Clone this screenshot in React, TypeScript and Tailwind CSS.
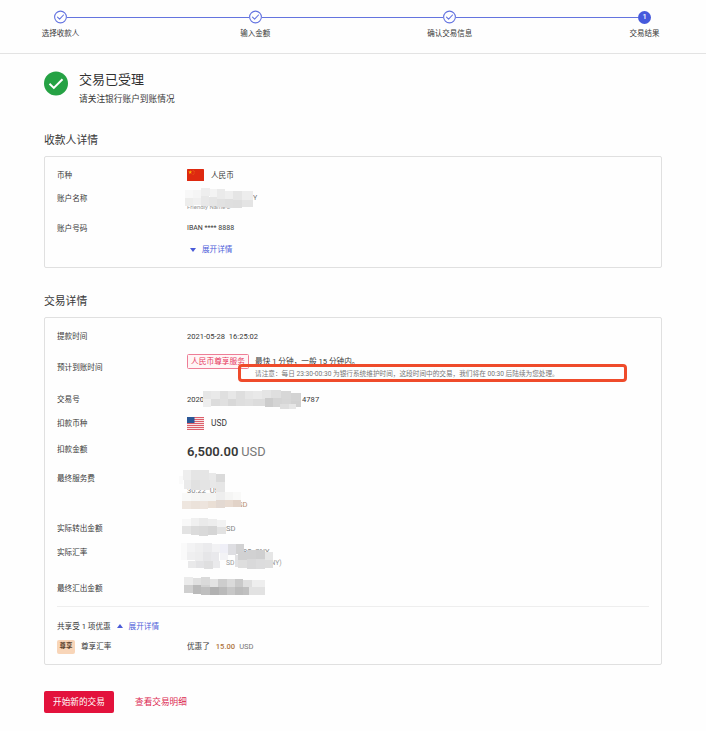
import React from 'react';
import clsx from 'clsx';

type Cell = [x: number, y: number, w: number, h: number, fill: string];

interface MosaicProps {
  cells: Cell[];
  className: string;
}

// Pixelated block covering private values
const Mosaic: React.FC<MosaicProps> = ({ cells, className }) => (
  <svg className={clsx('absolute', className)} width="130" height="50" viewBox="0 0 130 50" aria-hidden="true">
    {cells.map(([x, y, w, h, fill], i) => (
      <rect key={i} x={x} y={y} width={w} height={h} fill={fill} />
    ))}
  </svg>
);

const nameCells: Cell[] = [
  [0, 3, 8, 8, '#f8f8f8'], [8, 3, 8, 8, '#f5f5f5'], [0, 11, 8, 8, '#ededec'], [8, 11, 8, 7, '#f0f0f0'],
  [16, 1, 9, 8, '#eeeeee'], [25, 2, 7, 8, '#f3f3f3'], [16, 9, 8, 10, '#e8e8e8'], [24, 10, 8, 9, '#e5e5e5'],
  [32, 2, 8, 10, '#eaeaea'], [40, 4, 8, 8, '#eeeeee'], [32, 12, 8, 8, '#e1e1e1'], [40, 12, 8, 9, '#dfdfdf'],
  [48, 4, 9, 9, '#e5e5e5'], [57, 4, 11, 9, '#ededed'], [48, 13, 9, 8, '#dedede'], [57, 13, 11, 7, '#e4e4e4'],
];

const orderCells: Cell[] = [
  [0, 2, 8, 8, '#e6e6e6'], [8, 2, 9, 8, '#e9e9e9'], [17, 2, 8, 8, '#dfdfdf'], [25, 2, 8, 8, '#e7e7e7'],
  [33, 2, 9, 8, '#dedede'], [42, 2, 8, 8, '#e6e6e6'], [50, 2, 9, 8, '#e9e9e9'],
  [0, 10, 8, 8, '#eeeeee'], [8, 10, 9, 7, '#dcdcdc'], [17, 10, 8, 7, '#e0e0e0'], [25, 10, 8, 7, '#d8d8d8'],
  [33, 10, 9, 7, '#dedede'], [42, 10, 8, 7, '#e0e0e0'], [50, 10, 12, 7, '#dcdcdc'],
  [59, 1, 9, 9, '#e5e5e5'], [68, 1, 10, 8, '#dfdfdf'], [78, 2, 10, 8, '#d7d7d7'], [88, 4, 10, 8, '#d3d3d3'],
  [62, 9, 8, 9, '#cccccc'], [70, 9, 9, 9, '#d4d4d4'], [79, 10, 9, 9, '#d6d6d6'], [88, 12, 10, 6, '#d1d1d1'],
  [77, 15, 9, 5, '#dedede'], [86, 15, 7, 5, '#e6e6e6'],
];

const feeCells: Cell[] = [
  [0, 7, 4, 8, '#fafafa'], [4, 1, 8, 10, '#eeeeee'], [12, 1, 9, 10, '#e5e5e5'], [21, 1, 9, 10, '#e5e5e5'],
  [30, 4, 7, 8, '#e9e9e9'], [5, 11, 7, 9, '#eaeaea'], [12, 11, 9, 10, '#e1e1e1'], [21, 11, 10, 10, '#e4e4e4'],
  [31, 11, 7, 8, '#e8e8e8'], [37, 5, 9, 8, '#dadada'], [37, 13, 9, 10, '#e6e6e6'],
  [3, 24, 9, 8, '#f9f9f8'], [12, 24, 9, 8, '#f6f6f5'], [21, 24, 16, 8, '#f4f4f3'], [37, 23, 9, 9, '#eeeeee'],
  [46, 23, 8, 8, '#f5f5f4'], [54, 23, 8, 8, '#f9f9f8'],
  [3, 32, 9, 8, '#eee6df'], [12, 32, 9, 8, '#ebe2da'], [21, 32, 8, 8, '#ede4dd'], [29, 32, 8, 7, '#eadfd5'],
  [37, 31, 9, 8, '#e3d9d2'], [46, 31, 8, 7, '#e8dbd1'], [54, 31, 8, 7, '#e2d3c8'],
];

const outCells: Cell[] = [
  [0, 2, 9, 8, '#f8f8f8'], [9, 1, 8, 8, '#f0f0f0'], [17, 1, 9, 8, '#eaeaea'], [26, 2, 9, 8, '#ededed'],
  [35, 3, 9, 7, '#f2f2f2'], [0, 9, 9, 8, '#e3e3e3'], [9, 9, 8, 9, '#dbdbdb'], [17, 9, 9, 10, '#d9d9d9'],
  [26, 9, 9, 9, '#d5d5d5'], [35, 10, 9, 7, '#e2e2e2'],
];

const rateCells: Cell[] = [
  [0, 0, 6, 9, '#fafafa'], [6, 0, 8, 9, '#f3f3f4'], [14, 0, 8, 9, '#efeff0'], [22, 0, 9, 9, '#ebebed'],
  [31, 1, 8, 9, '#f2f2f4'], [39, 1, 8, 9, '#efeff7'], [47, 1, 8, 11, '#dedee2'], [55, 1, 8, 10, '#d2d2d3'],
  [0, 9, 6, 8, '#fafafa'], [6, 9, 8, 8, '#efeff0'], [14, 9, 8, 9, '#ededee'], [22, 9, 8, 9, '#e6e6e8'],
  [30, 9, 8, 9, '#e9e9ec'], [39, 10, 8, 7, '#f3f3f6'], [54, 12, 3, 12, '#e2e2e4'],
  [7, 18, 8, 7, '#e9e9ea'], [15, 18, 8, 7, '#e3e3e5'], [23, 18, 9, 8, '#dfdfe0'], [32, 18, 7, 7, '#eaeaec'],
  [57, 9, 9, 9, '#d1d1d2'], [66, 7, 9, 9, '#d1d1d2'], [75, 7, 9, 9, '#cfcfd0'], [84, 9, 8, 8, '#e6e6e6'],
  [57, 17, 9, 8, '#dedede'], [66, 16, 9, 10, '#d9d9da'], [75, 16, 9, 10, '#dcdcdd'], [84, 17, 8, 8, '#dddddd'],
];

const totalCells: Cell[] = [
  [0, 1, 9, 9, '#ebebeb'], [9, 2, 8, 7, '#e0e0e0'], [17, 1, 9, 8, '#dadada'], [26, 3, 8, 8, '#e3e3e3'],
  [34, 3, 9, 8, '#cdcdcd'], [43, 3, 8, 8, '#dadada'], [51, 3, 8, 8, '#c9c9c9'], [59, 4, 9, 8, '#dfdfdf'],
  [68, 4, 13, 8, '#eeeeee'], [0, 9, 9, 8, '#cfcfcf'], [9, 9, 8, 9, '#bababa'], [17, 9, 9, 9, '#d2d2d2'],
  [17, 11, 9, 8, '#bfbfbf'], [26, 11, 9, 8, '#b1b1b1'], [35, 11, 8, 8, '#bababa'], [43, 11, 8, 8, '#c7c7c7'],
  [51, 11, 8, 8, '#bcbcbc'], [59, 11, 6, 8, '#c0c0c0'], [65, 11, 16, 8, '#e2e2e2'],
];

const ChinaFlag: React.FC = () => (
  <svg width="17" height="12" viewBox="0 0 17 12">
    <rect width="17" height="12" rx="0.6" fill="#de2910" />
    <path d="M3.2 1.2l.5 1.3 1.4.1-1.1.9.4 1.4-1.2-.8-1.2.8.4-1.4-1.1-.9 1.4-.1z" fill="#ffb400" />
    <g fill="#f0831a">
      <circle cx="6.1" cy="1.3" r=".45" />
      <circle cx="7.1" cy="2.5" r=".45" />
      <circle cx="7.1" cy="4" r=".45" />
      <circle cx="6.1" cy="5.2" r=".45" />
    </g>
  </svg>
);

const UsFlag: React.FC = () => (
  <svg width="17" height="13" viewBox="0 0 17 13">
    <rect width="17" height="13" rx="0.6" fill="#f6e4e5" />
    {[0, 2, 4, 6, 8, 10, 12].map((y) => (
      <rect key={y} y={y} width="17" height="1" fill="#dd5f6b" />
    ))}
    <rect width="7.5" height="6" fill="#2a5796" />
  </svg>
);

const steps = ['选择收款人', '输入金额', '确认交易信息', '交易结果'];

const Steps: React.FC = () => (
  <div className="h-[54px] border-b border-[#e3e3e3] pl-[54px] pr-[55px] pt-[10px]">
    <div className="flex items-start">
      {steps.map((label, i) => (
        <React.Fragment key={label}>
          {i > 0 && <div className="mt-[6.5px] h-px flex-1 bg-[#6474df]" />}
          <div className="flex w-[13px] shrink-0 flex-col items-center">
            {i < steps.length - 1 ? (
              <svg width="13" height="14" viewBox="0 0 13 14" fill="none" stroke="#6272e0" strokeLinecap="round" strokeLinejoin="round">
                <circle cx="6.5" cy="7" r="5.9" strokeWidth="1.1" />
                <path d="M3.5 7.2l2.1 2L9.5 5" strokeWidth="1.1" />
              </svg>
            ) : (
              <div className="my-[0.5px] flex size-[13px] items-center justify-center rounded-full bg-[#4559dc] text-[7.5px] font-medium leading-none text-white">1</div>
            )}
            <span className="mt-[4px] whitespace-nowrap text-[7.5px] leading-[11px]">{label}</span>
          </div>
        </React.Fragment>
      ))}
    </div>
  </div>
);

interface RowProps {
  label?: string;
  className?: string;
  children: React.ReactNode;
}

const Row: React.FC<RowProps> = ({ label, className, children }) => (
  <div className={clsx('flex items-center', className)}>
    <span className="w-[130px] shrink-0 whitespace-nowrap">{label}</span>
    <div className="relative flex h-full min-w-0 flex-1 items-center whitespace-nowrap">{children}</div>
  </div>
);

export default function App() {
  return (
    <div className="h-[731px] w-[706px] overflow-hidden bg-[#fefefe] font-[Roboto,'Noto_Sans_CJK_SC',sans-serif] text-[7.6px] leading-[11px] text-[#383838]">
      <Steps />

      <main className="ml-[44px] w-[618px]">
        {/* Result */}
        <div className="flex pt-[17px]">
          <svg className="shrink-0" width="24" height="25" viewBox="0 0 24 25">
            <circle cx="12" cy="12.4" r="12" fill="#25a244" />
            <path d="M5.5 12.8l4.3 4.1 8.7-8.7" fill="none" stroke="#fff" strokeWidth="2" />
          </svg>
          <div className="ml-[11px]">
            <h1 className="text-[13px] leading-[18px] text-[#303030]">交易已受理</h1>
            <p className="mt-[4px] text-[8.7px] leading-[13px]">请关注银行账户到账情况</p>
          </div>
        </div>

        {/* Payee */}
        <h2 className="mt-[26px] text-[10.8px] leading-[17px]">收款人详情</h2>
        <section className="mt-[7px] h-[112px] rounded-[2px] border border-[#e0e0e0] pl-[12px] pt-[6px]">
          <Row label="币种" className="h-[24px]">
            <ChinaFlag />
            <span className="ml-[7px] pt-px">人民币</span>
          </Row>
          <Row label="账户名称" className="h-[22px]">
            <span className="absolute left-[66px] top-[6px] text-[7px] text-[#777]">Y</span>
            <span className="absolute left-0 top-[14px] text-[6px] text-[#999]">Friendly Name 2</span>
            <Mosaic cells={nameCells} className="-left-[2px] top-0" />
          </Row>
          <Row label="账户号码" className="mt-[5px] h-[29px]">
            <span className="text-[7px]">IBAN **** 8888</span>
          </Row>
          <Row className="h-[13px] text-[#5060da]">
            <svg className="ml-[3px]" width="6" height="4" viewBox="0 0 6 4"><path d="M0 0h6L3 4z" fill="#4a5bd8" /></svg>
            <span className="ml-[6px]">展开详情</span>
          </Row>
        </section>

        {/* Transaction */}
        <h2 className="mt-[25px] text-[10.8px] leading-[17px]">交易详情</h2>
        <section className="mt-[7px] h-[348px] rounded-[2px] border border-[#e0e0e0] px-[12px] pt-[8px]">
          <Row label="提款时间" className="h-[20px]">
            <span className="whitespace-pre text-[7.55px]">{'2021-05-28  16:25:02'}</span>
          </Row>
          <Row label="预计到账时间" className="h-[42px]">
            <span className="-mt-[11px] flex h-[15px] w-[62px] items-center justify-center rounded-[1.5px] border border-[#ee7d96] bg-[#fff5f6] text-[7.7px] text-[#e63c62]">人民币尊享服务</span>
            <div className="ml-[6px]">
              <p className="text-[7.65px] leading-[11px]">最快 1 分钟，一般 15 分钟内。</p>
              <p className="mt-[2px] text-[6.65px] leading-[10px] text-[#777]">请注意：每日 23:30-00:30 为银行系统维护时间，这段时间中的交易，我们将在 00:30 后陆续为您处理。</p>
            </div>
            {/* Callout frame */}
            <div className="absolute left-[51px] top-[18px] h-[18px] w-[389px] rounded-[4px] border-[3.5px] border-[#ef4b2b]" />
          </Row>
          <Row label="交易号" className="h-[22px]">
            <span>2020</span>
            <span className="ml-[98px]">4787</span>
            <Mosaic cells={orderCells} className="left-[16px] top-px" />
          </Row>
          <Row label="扣款币种" className="h-[26px]">
            <UsFlag />
            <span className="ml-[7px] text-[8.4px]">USD</span>
          </Row>
          <Row label="扣款金额" className="h-[26px]">
            <span className="pt-[5px] text-[13px] font-semibold">6,500.00</span>
            <span className="ml-[3px] pt-[5px] text-[12.8px] text-[#777]">USD</span>
          </Row>
          <Row label="最终服务费" className="mt-[2px] h-[29px]">
            <span className="absolute left-0 top-[21px] text-[7.6px] text-[#888]">30.22&nbsp;&nbsp;USD</span>
            <span className="absolute left-[46px] top-[35px] text-[7.6px] text-[#b99072]">USD</span>
            <Mosaic cells={feeCells} className="-left-[8px] top-[5px]" />
          </Row>
          <Row label="实际转出金额" className="mt-[24px] h-[22px]">
            <span className="ml-[34px] text-[7.6px] text-[#888]">USD</span>
            <Mosaic cells={outCells} className="-left-[5px] top-0" />
          </Row>
          <Row label="实际汇率" className="h-[26px]">
            <span className="absolute left-[56px] top-[7px] text-[7.4px] text-[#888]">85&nbsp;&nbsp;CNY</span>
            <span className="absolute left-[39px] top-[19px] text-[6.8px] text-[#999]">SD</span>
            <span className="absolute left-[79px] top-[19px] text-[6.8px] text-[#999]">CNY)</span>
            <Mosaic cells={rateCells} className="-left-[6px] top-[4px]" />
          </Row>
          <Row label="最终汇出金额" className="mt-[10px] h-[26px]">
            <Mosaic cells={totalCells} className="-left-[3px] top-px" />
          </Row>

          <div className="mt-[5px] border-t border-[#eeeeee]" />

          <div className="mt-[9px] flex h-[20px] items-center">
            <span>共享受 1 项优惠</span>
            <svg className="ml-[6px]" width="6" height="4" viewBox="0 0 6 4"><path d="M0 4h6L3 0z" fill="#4a5bd8" /></svg>
            <span className="ml-[6px] text-[#5060da]">展开详情</span>
          </div>
          <div className="flex h-[21px] items-center">
            <span className="flex h-[14px] w-[18px] items-center justify-center rounded-[2px] bg-[#f8d5b8] text-[6.4px] font-bold text-[#59402c]">尊享</span>
            <span className="ml-[6px] w-[106px]">尊享汇率</span>
            <span>优惠了</span>
            <span className="ml-[6px] font-medium text-[#ae7440]">15.00</span>
            <span className="ml-[4px] text-[#777]">USD</span>
          </div>
        </section>

        {/* Actions */}
        <div className="mt-[26px] flex items-center text-[8.65px]">
          <button className="h-[22px] w-[70px] rounded-[2px] bg-[#e3123c] text-white">开始新的交易</button>
          <button className="ml-[21px] text-[#dc2850]">查看交易明细</button>
        </div>
      </main>
    </div>
  );
}
